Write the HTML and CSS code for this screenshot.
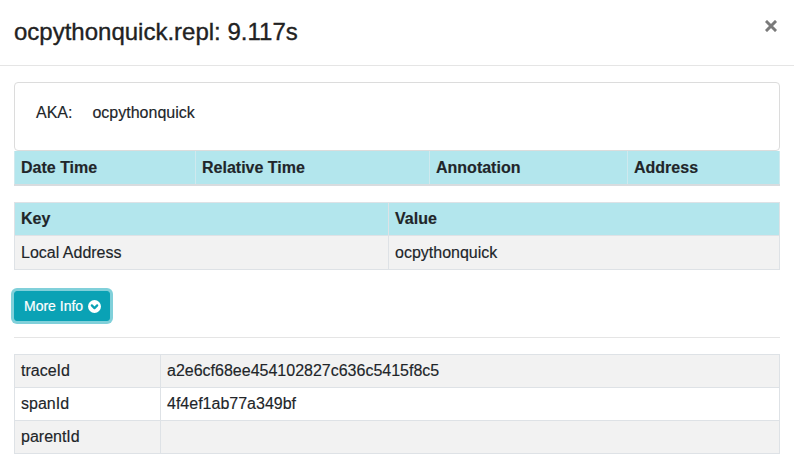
FILE: index.html
```html
<!DOCTYPE html>
<html>
<head>
<meta charset="utf-8">
<link rel="stylesheet" href="styles.css">
</head>
<body>
<div class="modal">
  <div class="modal-header">
    <h4 class="title">ocpythonquick.repl: 9.117s</h4>
    <button class="close" aria-label="Close">
      <svg width="12" height="12" viewBox="0 0 12 12"><path d="M2 2L10 10M10 2L2 10" stroke="#7a7a7a" stroke-width="3" stroke-linecap="square"/></svg>
    </button>
  </div>
  <div class="modal-body">
    <div class="aka-card">
      <span class="aka-label">AKA:</span>
      <span class="aka-value">ocpythonquick</span>
    </div>
    <table class="tbl tbl-annot">
      <thead>
        <tr>
          <th class="c1">Date Time</th>
          <th class="c2">Relative Time</th>
          <th class="c3">Annotation</th>
          <th class="c4">Address</th>
        </tr>
      </thead>
    </table>
    <table class="tbl tbl-kv">
      <thead>
        <tr><th class="k">Key</th><th>Value</th></tr>
      </thead>
      <tbody>
        <tr class="gray"><td>Local Address</td><td>ocpythonquick</td></tr>
      </tbody>
    </table>
    <button class="more-btn">More Info
      <svg class="chev" width="13" height="13" viewBox="0 0 13 13"><circle cx="6.5" cy="6.5" r="6.5" fill="#fff"/><path d="M3.8 5.4L6.5 8.1L9.2 5.4" fill="none" stroke="#0aa2b5" stroke-width="2.2" stroke-linecap="round" stroke-linejoin="round"/></svg>
    </button>
    <hr class="sep">
    <table class="tbl tbl-ids">
      <tbody>
        <tr class="gray"><td class="k">traceId</td><td>a2e6cf68ee454102827c636c5415f8c5</td></tr>
        <tr><td class="k">spanId</td><td>4f4ef1ab77a349bf</td></tr>
        <tr class="gray"><td class="k">parentId</td><td></td></tr>
      </tbody>
    </table>
  </div>
</div>
</body>
</html>
```

FILE: styles.css
```css
* { box-sizing: border-box; }
html, body { margin: 0; padding: 0; background: #fff; }
body {
  font-family: "Liberation Sans", Arial, sans-serif;
  color: #212529;
  font-size: 16px;
  width: 794px;
  height: 476px;
  overflow: hidden;
  -webkit-text-stroke: 0.15px #212529;
}
.modal { width: 794px; }
.modal-header {
  display: flex;
  align-items: flex-start;
  justify-content: space-between;
  height: 66px;
  padding: 18px 17px 0 14px;
  border-bottom: 1px solid #e5e5e5;
}
.title {
  margin: 0;
  font-size: 24px;
  font-weight: 400;
  line-height: 28px;
  color: #222;
  -webkit-text-stroke: 0.35px #222;
}
.close {
  border: 0;
  background: none;
  padding: 0;
  margin-top: 2px;
  width: 12px;
  height: 12px;
  display: flex;
}
.modal-body { padding: 16px 14px 0 14px; }
.aka-card {
  height: 69px;
  border: 1px solid #dcdcdc;
  border-radius: 4px;
  padding: 20px 21px 0 21px;
  display: flex;
  gap: 20px;
  line-height: 20px;
}
.tbl {
  width: 766px;
  border-collapse: collapse;
  table-layout: fixed;
}
.tbl th, .tbl td {
  text-align: left;
  padding: 0 6px;
  height: 33px;
  border: 1px solid #dee2e6;
  vertical-align: middle;
  line-height: 20px;
}
.tbl th { font-weight: 700; background: #b3e6ed; }
.tbl-annot th { height: 34px; border-top: 0; border-bottom: 2px solid #d8dcdf; border-left: 1px solid #cfe9ee; border-right: 1px solid #cfe9ee; }
.tbl-annot .c1 { width: 181px; }
.tbl-annot .c2 { width: 234px; }
.tbl-annot .c3 { width: 198px; }
.tbl-kv { margin-top: 16px; }
.tbl-kv .k { width: 374px; }
.tbl-kv td { height: 34px; }
.gray td { background: #f2f2f2; }
.more-btn {
  margin: 21px 0 0 0;
  display: flex;
  align-items: center;
  gap: 5px;
  height: 30px;
  width: 96px;
  padding: 0 0 0 9px;
  font-family: "Liberation Sans", Arial, sans-serif;
  font-size: 14px;
  color: #fff;
  -webkit-text-stroke: 0.2px #fff;
  background: #0aa2b5;
  border: 1px solid #0aa2b5;
  border-radius: 3px;
  box-shadow: 0 0 0 3px #80d0da;
}
.chev { display: block; }
.sep {
  margin: 16px 0 0 0;
  border: 0;
  border-top: 1px solid #e5e5e5;
  width: 766px;
}
.tbl-ids { margin-top: 16px; }
.tbl-ids .k { width: 146px; }
```
